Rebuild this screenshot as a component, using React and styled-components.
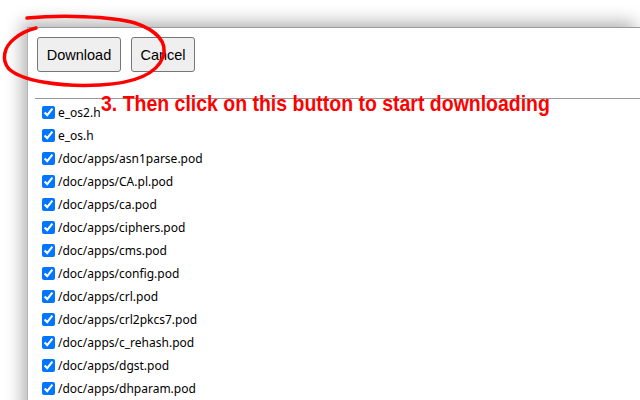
import React from "react";
import styled, { createGlobalStyle } from "styled-components";

const files = [
  "e_os2.h",
  "e_os.h",
  "/doc/apps/asn1parse.pod",
  "/doc/apps/CA.pl.pod",
  "/doc/apps/ca.pod",
  "/doc/apps/ciphers.pod",
  "/doc/apps/cms.pod",
  "/doc/apps/config.pod",
  "/doc/apps/crl.pod",
  "/doc/apps/crl2pkcs7.pod",
  "/doc/apps/c_rehash.pod",
  "/doc/apps/dgst.pod",
  "/doc/apps/dhparam.pod",
];

export default function App() {
  return (
    <>
      <GlobalStyle />
      <Screen>
        <Popup>
          <Toolbar>
            <Button $width={84}>Download</Button>
            <Button $width={64}>Cancel</Button>
          </Toolbar>
          <Body>
            <Divider />
            <FileList>
              {files.map((name) => (
                <FileRow key={name}>
                  <Check type="checkbox" defaultChecked />
                  <span>{name}</span>
                </FileRow>
              ))}
            </FileList>
          </Body>
        </Popup>

        <Scribble viewBox="0 0 640 400" width="640" height="400">
          <path
            d="M27 18 C 60 15, 110 16, 135 23 C 156 30, 168 42, 163 57 C 157 73, 136 83, 100 85 C 60 87, 22 81, 9 69 C 1 60, 4 47, 14 39 C 21 33, 28 30, 36 28"
            fill="none"
            stroke="#ff0000"
            strokeWidth="3.5"
            strokeLinecap="round"
            strokeLinejoin="round"
          />
        </Scribble>
        <Note>3. Then click on this button to start downloading</Note>
      </Screen>
    </>
  );
}

const GlobalStyle = createGlobalStyle`
  html, body {
    margin: 0;
    padding: 0;
    background: #ffffff;
    overflow: hidden;
  }
`;

const Screen = styled.div`
  position: relative;
  width: 640px;
  height: 400px;
  overflow: hidden;
  background: #ffffff;
`;

const Popup = styled.div`
  margin: 27px 0 0 27px;
  height: 400px;
  background: #ffffff;
  border-top: 1px solid #9a9a9a;
  border-left: 1px solid #b4b4b4;
  box-shadow: -5px -5px 16px rgba(0, 0, 0, 0.3);
`;

const Toolbar = styled.div`
  display: flex;
  gap: 10px;
  padding: 9px 0 0 9px;
  height: 61px;
`;

const Button = styled.button`
  width: ${(p) => p.$width}px;
  height: 35px;
  padding: 0;
  background: #efefef;
  border: 1px solid #767676;
  border-radius: 3px;
  font-family: "Liberation Sans", Arial, sans-serif;
  font-size: 14.5px;
  color: #000000;
`;

const Body = styled.div`
  padding-left: 7px;
`;

const Divider = styled.div`
  height: 1px;
  background: #999999;
`;

const FileList = styled.div`
  display: flex;
  flex-direction: column;
  padding: 2px 0 0 7px;
`;

const FileRow = styled.label`
  display: flex;
  align-items: center;
  height: 23px;
  font-family: "Noto Sans", "Open Sans", sans-serif;
  font-size: 12px;
  color: #000000;
`;

const Check = styled.input`
  width: 13px;
  height: 13px;
  margin: 0 3px 0 0;
  accent-color: #0075ff;
`;

const Scribble = styled.svg`
  position: absolute;
  top: 0;
  left: 0;
  pointer-events: none;
`;

const Note = styled.div`
  position: absolute;
  left: 101px;
  top: 92px;
  font-family: "Liberation Sans", Arial, sans-serif;
  font-weight: bold;
  font-size: 22px;
  line-height: 24px;
  color: #ff0000;
  white-space: nowrap;
  transform: scaleX(0.885);
  transform-origin: left center;
`;
